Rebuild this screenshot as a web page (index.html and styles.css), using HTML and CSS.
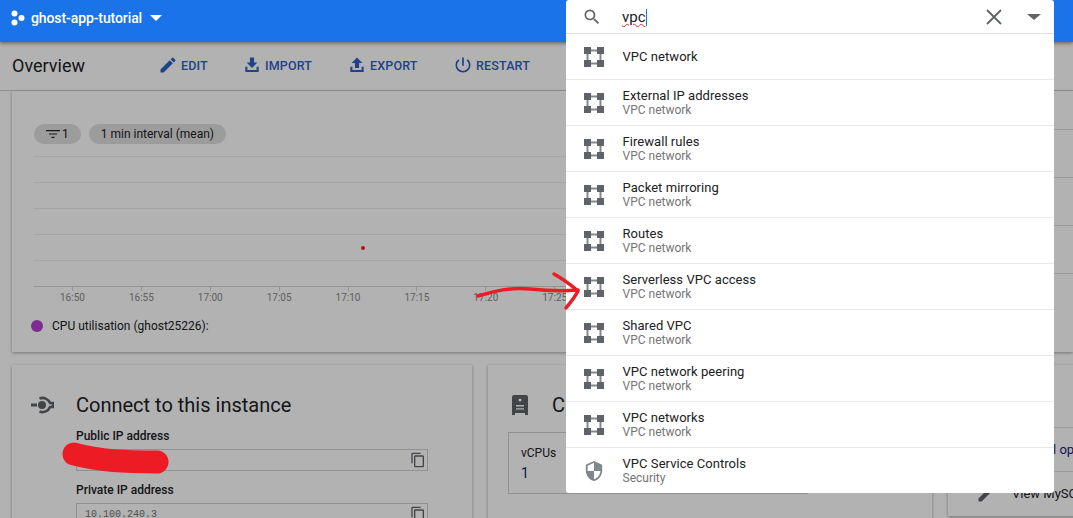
FILE: index.html
```html
<!DOCTYPE html>
<html>
<head>
  <title>ghost-app-tutorial - Overview</title>
  <link rel="stylesheet" href="styles.css">
</head>
<body>
  <svg width="0" height="0" class="defs">
    <symbol id="vpc" viewBox="0 0 20 20">
      <path d="M7 3.500h6M7 16.500h6M3.500 7v6M16.500 7v6" stroke="#85878a" stroke-width="2" fill="none"/>
      <path d="M0 0h7v7H0zM13 0h7v7h-7zM0 13h7v7H0zM13 13h7v7h-7z" fill="#5f6368"/>
    </symbol>
    <symbol id="copy" viewBox="0 0 24 24">
      <path d="M16 1H4c-1.100 0-2 .9-2 2v14h2V3h12V1zm3 4H8c-1.100 0-2 .9-2 2v14c0 1.100.9 2 2 2h11c1.100 0 2-.9 2-2V7c0-1.100-.9-2-2-2zm0 16H8V7h11v14z"/>
    </symbol>
  </svg>

  <header class="topbar">
    <svg class="project-icon" viewBox="0 0 14 16" width="14" height="16" fill="#fff">
      <circle cx="3.500" cy="3.500" r="3"/><circle cx="3.500" cy="12.500" r="3"/><circle cx="10.500" cy="8" r="3"/>
    </svg>
    <span class="project-name">ghost-app-tutorial</span>
    <span class="caret"></span>
  </header>

  <div class="main">
    <div class="toolbar">
      <h1>Overview</h1>
      <a class="tool tool-edit">
        <svg viewBox="0 0 24 24" width="20" height="20"><path d="M3 17.250V21h3.750L17.810 9.940l-3.750-3.750L3 17.250zM20.710 7.040a1 1 0 0 0 0-1.410l-2.340-2.340a1 1 0 0 0-1.410 0l-1.830 1.830 3.750 3.750 1.830-1.830z"/></svg>
        EDIT
      </a>
      <a class="tool tool-import">
        <svg viewBox="0 0 24 24" width="20" height="20"><path d="M9.500 3h5v6h4l-6.500 6.500L5.500 9h4zM4 14h2.500v4h11v-4H20v6.500H4z"/></svg>
        IMPORT
      </a>
      <a class="tool tool-export">
        <svg viewBox="0 0 24 24" width="20" height="20"><path d="M12 3l6.500 6.500h-4v6h-5v-6h-4zM4 14h2.500v4h11v-4H20v6.500H4z"/></svg>
        EXPORT
      </a>
      <a class="tool tool-restart">
        <svg viewBox="0 0 24 24" width="20" height="20"><path d="M13 3h-2v10h2V3zm4.830 2.170-1.420 1.420A6.920 6.920 0 0 1 19 12c0 3.870-3.130 7-7 7s-7-3.130-7-7c0-2.220 1.030-4.200 2.580-5.420L6.170 5.170A8.960 8.960 0 0 0 3 12c0 4.970 4.030 9 9 9s9-4.030 9-9c0-2.740-1.230-5.190-3.170-6.830z"/></svg>
        RESTART
      </a>
    </div>

    <div class="content">
      <section class="card chart-card">
        <div class="chart">
          <div class="chips">
            <span class="chip">
              <svg viewBox="0 0 14 10" width="14" height="10"><path d="M0 1h14v1.200H0zM3 4.400h8v1.200H3zM5.500 7.800h3V9h-3z"/></svg>
              1
            </span>
            <span class="chip">1 min interval (mean)</span>
          </div>
          <div class="plot">
            <div class="gridline"></div>
            <div class="gridline"></div>
            <div class="gridline"></div>
            <div class="gridline"></div>
            <div class="gridline"></div>
            <span class="point"></span>
          </div>
          <div class="axis">
            <span>16:50</span><span>16:55</span><span>17:00</span><span>17:05</span><span>17:10</span><span>17:15</span><span>17:20</span><span>17:25</span>
          </div>
          <div class="legend"><span class="legend-dot"></span>CPU utilisation (ghost25226):</div>
        </div>
        <div class="side">
          <div class="side-row row-a"></div>
          <div class="side-row row-b"></div>
          <div class="side-row row-b"></div>
          <div class="side-row row-b"></div>
          <div class="side-row row-c"></div>
        </div>
      </section>

      <div class="cards">
        <section class="card connect">
          <h2>
            <svg viewBox="0 0 24 24" width="24" height="24"><path d="M1 10.500h6v3H1z"/><circle cx="12" cy="12" r="4"/><path d="M9.500 5.500A8 8 0 0 1 20 10h3v4h-3A8 8 0 0 1 9.500 18.500" fill="none" stroke="#5f6368" stroke-width="2.500"/></svg>
            <span>Connect to this instance</span>
          </h2>
          <div class="field">
            <label>Public IP address</label>
            <div class="ip-box"><span></span><svg width="16" height="16"><use href="#copy"/></svg></div>
          </div>
          <div class="field">
            <label>Private IP address</label>
            <div class="ip-box"><span>10.100.240.3</span><svg width="16" height="16"><use href="#copy"/></svg></div>
          </div>
        </section>

        <section class="card compute">
          <h2>
            <svg viewBox="0 0 24 24" width="24" height="24"><path d="M6 2h12a2 2 0 0 1 2 2v18h-3v-2H7v2H4V4a2 2 0 0 1 2-2zm4.500 5a1.500 1.500 0 1 0 3 0 1.500 1.500 0 0 0-3 0zM8 12v1.400h8V12H8zm0 3.200v1.400h8v-1.400H8z" fill-rule="evenodd"/></svg>
            <span>C</span>
          </h2>
          <div class="spec">
            <div class="spec-name">vCPUs</div>
            <div class="spec-value">1</div>
          </div>
        </section>

        <section class="card links">
          <div class="link-row link-top"><a>l op</a></div>
          <div class="link-row">
            <svg viewBox="0 0 24 24" width="20" height="20"><path d="M3 17.250V21h3.750L17.810 9.940l-3.750-3.750L3 17.250z"/></svg>
            <span>View MySC</span>
          </div>
        </section>
      </div>
    </div>

    <div class="scrim"></div>
  </div>

  <div class="search">
    <div class="search-bar">
      <svg class="search-icon" viewBox="0 0 24 24" width="20" height="20"><path d="M15.500 14h-.79l-.28-.27A6.470 6.470 0 0 0 16 9.500 6.500 6.500 0 1 0 9.500 16c1.610 0 3.090-.59 4.230-1.570l.27.28v.79l5 4.990L20.490 19l-4.990-5zm-6 0C7.010 14 5 11.990 5 9.500S7.010 5 9.500 5 14 7.010 14 9.500 11.990 14 9.500 14z"/></svg>
      <span class="query">vpc</span>
      <svg class="clear-icon" viewBox="0 0 16 16" width="16" height="16"><path d="M1 1l14 14M15 1L1 15" stroke="#5f6368" stroke-width="1.800" fill="none"/></svg>
      <span class="search-caret"></span>
    </div>
    <ul class="results">
      <li><svg width="20" height="20"><use href="#vpc"/></svg><div><b>VPC network</b></div></li>
      <li><svg width="20" height="20"><use href="#vpc"/></svg><div><b>External IP addresses</b><small>VPC network</small></div></li>
      <li><svg width="20" height="20"><use href="#vpc"/></svg><div><b>Firewall rules</b><small>VPC network</small></div></li>
      <li><svg width="20" height="20"><use href="#vpc"/></svg><div><b>Packet mirroring</b><small>VPC network</small></div></li>
      <li><svg width="20" height="20"><use href="#vpc"/></svg><div><b>Routes</b><small>VPC network</small></div></li>
      <li><svg width="20" height="20"><use href="#vpc"/></svg><div><b>Serverless VPC access</b><small>VPC network</small></div></li>
      <li><svg width="20" height="20"><use href="#vpc"/></svg><div><b>Shared VPC</b><small>VPC network</small></div></li>
      <li><svg width="20" height="20"><use href="#vpc"/></svg><div><b>VPC network peering</b><small>VPC network</small></div></li>
      <li><svg width="20" height="20"><use href="#vpc"/></svg><div><b>VPC networks</b><small>VPC network</small></div></li>
      <li>
        <svg viewBox="0 0 22 24" width="20" height="22">
          <path d="M11 1 2 5v6.500C2 17 5.800 22 11 23c5.200-1 9-6 9-11.500V5z" fill="#80868b"/>
          <path d="M11 3 4 6.200V12h7zM11 12v9c3.800-1 6.800-4.700 7-9z" fill="#fff"/>
        </svg>
        <div><b>VPC Service Controls</b><small>Security</small></div>
      </li>
    </ul>
  </div>

  <!-- hand drawn marks on top of the screenshot -->
  <svg class="marks" width="1073" height="518" fill="none" stroke="#ed1c24" stroke-linecap="round" stroke-linejoin="round">
    <path d="M478 296C495 291 510 287 530 289S565 291 578 290" stroke-width="3.500"/>
    <path d="M554 274C563 279 571 285 578 291 575 297 570 303 566 308" stroke-width="3.500"/>
    <path d="M74 454C100 461 125 462 157 462" stroke-width="23"/>
  </svg>
</body>
</html>
```

FILE: styles.css
```css
* {
  box-sizing: border-box;
}

html, body {
  height: 518px;
  overflow: hidden;
}

body {
  margin: 0;
  font-family: Roboto, sans-serif;
  color: #202124;
  background-color: #fff;
}

.defs {
  display: block;
  height: 0;
}

.topbar {
  position: relative;
  z-index: 2;
  display: flex;
  align-items: center;
  height: 42px;
  padding: 0 0 6px 11px;
  background-color: #1a73e8;
  color: #fff;
  box-shadow: 0 1px 4px rgba(0, 0, 0, 0.5);
}

.project-name {
  margin-left: 6px;
  font-size: 14px;
  font-weight: 500;
  letter-spacing: -0.1px;
}

.caret {
  margin-left: 8px;
  border-top: 6px solid #fff;
  border-left: 6px solid transparent;
  border-right: 6px solid transparent;
}

.main {
  position: relative;
  height: 476px;
  overflow: hidden;
}

.scrim {
  position: absolute;
  top: 0;
  left: 0;
  right: 0;
  bottom: 0;
  background-color: rgba(0, 0, 0, 0.3);
}

.toolbar {
  display: flex;
  align-items: center;
  height: 49px;
  padding: 0 0 2px 12px;
  border-bottom: 1px solid #d0d0d0;
}

.toolbar h1 {
  width: 146px;
  margin: 0;
  font-size: 18px;
  font-weight: 400;
}

.tool {
  display: flex;
  align-items: center;
  gap: 3px;
  font-size: 12.500px;
  font-weight: 500;
  letter-spacing: 0.15px;
  color: #2f5fc4;
}

.tool svg {
  fill: #2f5fc4;
}

.tool-edit {
  width: 84px;
}

.tool-import {
  width: 105px;
}

.tool-export {
  width: 106px;
}

.content {
  padding-left: 12px;
}

.card {
  background-color: #fff;
  box-shadow: 0 1px 3px rgba(0, 0, 0, 0.35);
}

.chart-card {
  display: flex;
  height: 261px;
}

.chart {
  width: 554px;
  padding: 33px 0 0 22px;
}

.chips {
  display: flex;
  gap: 8px;
}

.chip {
  display: flex;
  align-items: center;
  gap: 2px;
  height: 20px;
  padding: 0 12px;
  border-radius: 10px;
  font-size: 12px;
  background-color: #e0e0e0;
}

.chip svg {
  fill: #202124;
}

.plot {
  position: relative;
  display: flex;
  flex-direction: column;
  justify-content: flex-end;
  height: 143px;
  padding-bottom: 25px;
  border-bottom: 1px solid #d4d4d4;
}

.gridline {
  flex-shrink: 0;
  height: 26px;
  border-bottom: 1px solid #ececec;
}

.point {
  position: absolute;
  left: 327px;
  top: 102px;
  width: 4px;
  height: 4px;
  border-radius: 50%;
  background-color: #ff1c24;
}

.axis {
  display: flex;
  padding-left: 26px;
  font-size: 10px;
  color: #8a8a8a;
}

.axis span {
  position: relative;
  flex-shrink: 0;
  width: 68.900px;
  padding-top: 5px;
}

.axis span::before {
  content: "";
  position: absolute;
  top: 0;
  left: 12px;
  height: 4px;
  border-left: 1px solid #d4d4d4;
}

.legend {
  display: flex;
  align-items: center;
  margin-top: 16px;
  margin-left: -3px;
  font-size: 12px;
}

.legend-dot {
  width: 12px;
  height: 12px;
  margin-right: 9px;
  border-radius: 50%;
  background-color: #b73fd0;
}

.side {
  flex: 1;
}

.side-row {
  border-bottom: 1px solid #dcdcdc;
}

.row-a {
  height: 39px;
}

.row-b {
  height: 48px;
}

.row-c {
  height: 78px;
  border-bottom: none;
}

.cards {
  display: grid;
  grid-template-columns: 460px 444px 140px;
  gap: 16px;
  margin-top: 13px;
}

.connect, .compute {
  height: 180px;
  padding: 28px 18px 0 18px;
}

.card h2 {
  display: flex;
  align-items: center;
  gap: 22px;
  margin: 0;
  font-size: 20px;
  font-weight: 400;
  line-height: 24px;
}

.card h2 svg {
  fill: #5f6368;
}

.field {
  margin-left: 46px;
}

.field label {
  display: block;
  margin-top: 12px;
  font-size: 12px;
  font-weight: 500;
  line-height: 14px;
}

.ip-box {
  display: flex;
  justify-content: space-between;
  align-items: center;
  width: 352px;
  height: 22px;
  margin-top: 6px;
  padding: 0 1px 0 8px;
  border: 1px solid #d0d0d0;
  font-family: "Liberation Mono", monospace;
  font-size: 10px;
  color: #757575;
}

.ip-box svg {
  fill: #5f6368;
}

.compute {
  padding-left: 20px;
}

.compute h2 {
  gap: 20px;
}

.spec {
  width: 300px;
  height: 62px;
  margin-top: 15px;
  padding: 13px 12px;
  border: 1px solid #d0d0d0;
}

.spec-name {
  font-size: 12px;
}

.spec-value {
  margin-top: 5px;
  font-size: 14px;
  color: #1a237e;
}

.links {
  height: 151px;
  padding-top: 62px;
  font-size: 13px;
}

.link-row {
  display: flex;
  align-items: center;
  height: 44px;
  padding-left: 28px;
  border-top: 1px solid #dcdcdc;
}

.link-top {
  padding-left: 105px;
  color: #1a237e;
}

.link-top a {
  white-space: nowrap;
}

.link-row span {
  margin-left: 16px;
  white-space: nowrap;
}

.link-row svg {
  flex-shrink: 0;
  fill: #5f6368;
}

.search {
  position: absolute;
  z-index: 3;
  top: 0;
  left: 566px;
  width: 488px;
  height: 493px;
  background-color: #fff;
  border-radius: 3px;
}

.search-bar {
  display: flex;
  align-items: center;
  height: 34px;
  padding: 0 13px 0 16px;
  border-bottom: 1px solid #e0e0e0;
}

.search-icon {
  fill: #5f6368;
}

.query {
  flex: 1;
  margin-left: 20px;
  font-size: 15px;
  text-decoration: underline wavy #d93025 1px;
}

.query::after {
  content: "";
  display: inline-block;
  height: 17px;
  border-left: 1px solid #1a73e8;
  vertical-align: -4px;
}

.clear-icon {
  margin-right: 25px;
}

.search-caret {
  border-top: 6px solid #5f6368;
  border-left: 7px solid transparent;
  border-right: 7px solid transparent;
}

.results {
  margin: 0;
  padding: 0;
  list-style: none;
}

.results li {
  display: flex;
  align-items: center;
  height: 46px;
  padding-left: 18px;
  border-bottom: 1px solid #e8e8e8;
}

.results li:last-child {
  border-bottom: none;
}

.results div {
  margin-left: 18.500px;
}

.results b {
  display: block;
  font-size: 13px;
  font-weight: 400;
  line-height: 14px;
  letter-spacing: 0.05px;
}

.results small {
  display: block;
  font-size: 12px;
  line-height: 14px;
  color: #757575;
}

.marks {
  position: absolute;
  z-index: 4;
  top: 0;
  left: 0;
  pointer-events: none;
}
```
